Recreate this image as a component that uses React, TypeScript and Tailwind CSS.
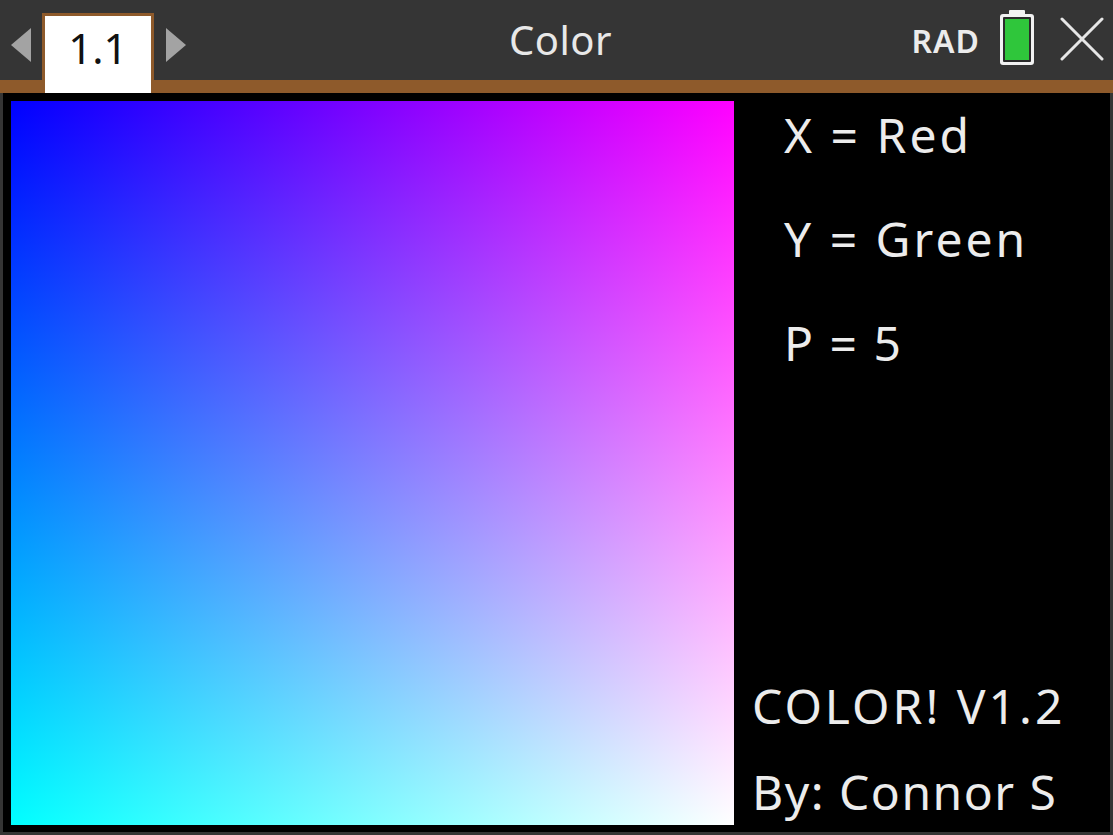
// App.tsx — TI-Nspire style "Color" program screen

const FONT = { fontFamily: '"Noto Sans", "DejaVu Sans", sans-serif' };

function Arrow({ dir }: { dir: "left" | "right" }) {
    return (
        <svg width="24" height="36" viewBox="0 0 24 36" className="shrink-0">
            {dir === "left" ? (
                <polygon points="22,1 22,35 2,18" fill="#a3a3a3" />
            ) : (
                <polygon points="2,1 2,35 22,18" fill="#a3a3a3" />
            )}
        </svg>
    );
}

function Battery() {
    return (
        <svg width="38" height="58" viewBox="0 0 38 58" className="shrink-0">
            <rect x="11" y="1" width="16" height="5" rx="1" fill="#f2f2f2" />
            <rect x="2" y="5" width="34" height="51" rx="3" fill="#f2f2f2" />
            <rect x="5" y="8" width="28" height="45" rx="1" fill="#2b2b2b" />
            <rect x="7" y="10" width="24" height="41" fill="#2fc63b" />
        </svg>
    );
}

function CloseX() {
    return (
        <svg width="44" height="44" viewBox="0 0 44 44" className="shrink-0">
            <path d="M2 2 L42 42 M42 2 L2 42" stroke="#e6e6e6" strokeWidth="3" strokeLinecap="round" />
        </svg>
    );
}

export default function App() {
    return (
        <div className="w-[1113px] h-[835px] bg-[#353535] flex flex-col overflow-hidden" style={FONT}>
            {/* title bar */}
            <div className="relative h-[93px] shrink-0 border-b-[13px] border-[#8e5a2b] flex items-start">
                <div className="flex items-start h-[80px]">
                    <div className="mt-[27px] ml-[9px]">
                        <Arrow dir="left" />
                    </div>
                    <div className="relative z-10 mt-[13px] ml-[9px] w-[112px] h-[80px] border-[3px] border-b-0 border-[#8e5a2b] bg-white flex items-start justify-center pt-[8px]">
                        <span className="text-[42px] leading-[48px] text-[#111]">1.1</span>
                    </div>
                    <div className="mt-[27px] ml-[10px]">
                        <Arrow dir="right" />
                    </div>
                </div>
                <div className="absolute left-0 right-0 top-[17px] flex justify-center pointer-events-none">
                    <span className="text-[40px] leading-[46px] text-[#e8e8e8] ml-[8px] tracking-[0.5px]">Color</span>
                </div>
                <div className="ml-auto flex items-center h-[80px] pr-[9px]">
                    <span className="text-[32px] font-semibold text-[#ececec] tracking-[1px] mr-[18px] mt-[2px]">RAD</span>
                    <div className="mr-[24px] mt-[-4px]">
                        <Battery />
                    </div>
                    <div className="mt-[-3px]">
                        <CloseX />
                    </div>
                </div>
            </div>

            {/* program canvas */}
            <div className="ml-[3px] mr-[3px] h-[739px] bg-black flex p-[8px] pr-0">
                <div className="w-[723px] h-[724px] shrink-0 bg-[#0000ff] bg-[image:linear-gradient(to_right,#000000,#ff0000),linear-gradient(to_bottom,#000000,#00ff00)] bg-blend-screen" />
                <div className="flex-1 flex flex-col text-[#ececec]">
                    <div className="pl-[50px] flex flex-col">
                        <div className="text-[48px] leading-[104px] -mt-[18px] tracking-[3px] whitespace-pre">X = Red</div>
                        <div className="text-[48px] leading-[104px] tracking-[3px] whitespace-pre">Y = Green</div>
                        <div className="text-[48px] leading-[104px] tracking-[2px] whitespace-pre">P = 5</div>
                    </div>
                    <div className="mt-auto pl-[18px] flex flex-col">
                        <div className="text-[48px] leading-[88px] tracking-[3px] -mb-[2px]">COLOR! V1.2</div>
                        <div className="text-[48px] leading-[88px] tracking-[1.5px] -mb-[12px]">By: Connor S</div>
                    </div>
                </div>
            </div>
        </div>
    );
}
